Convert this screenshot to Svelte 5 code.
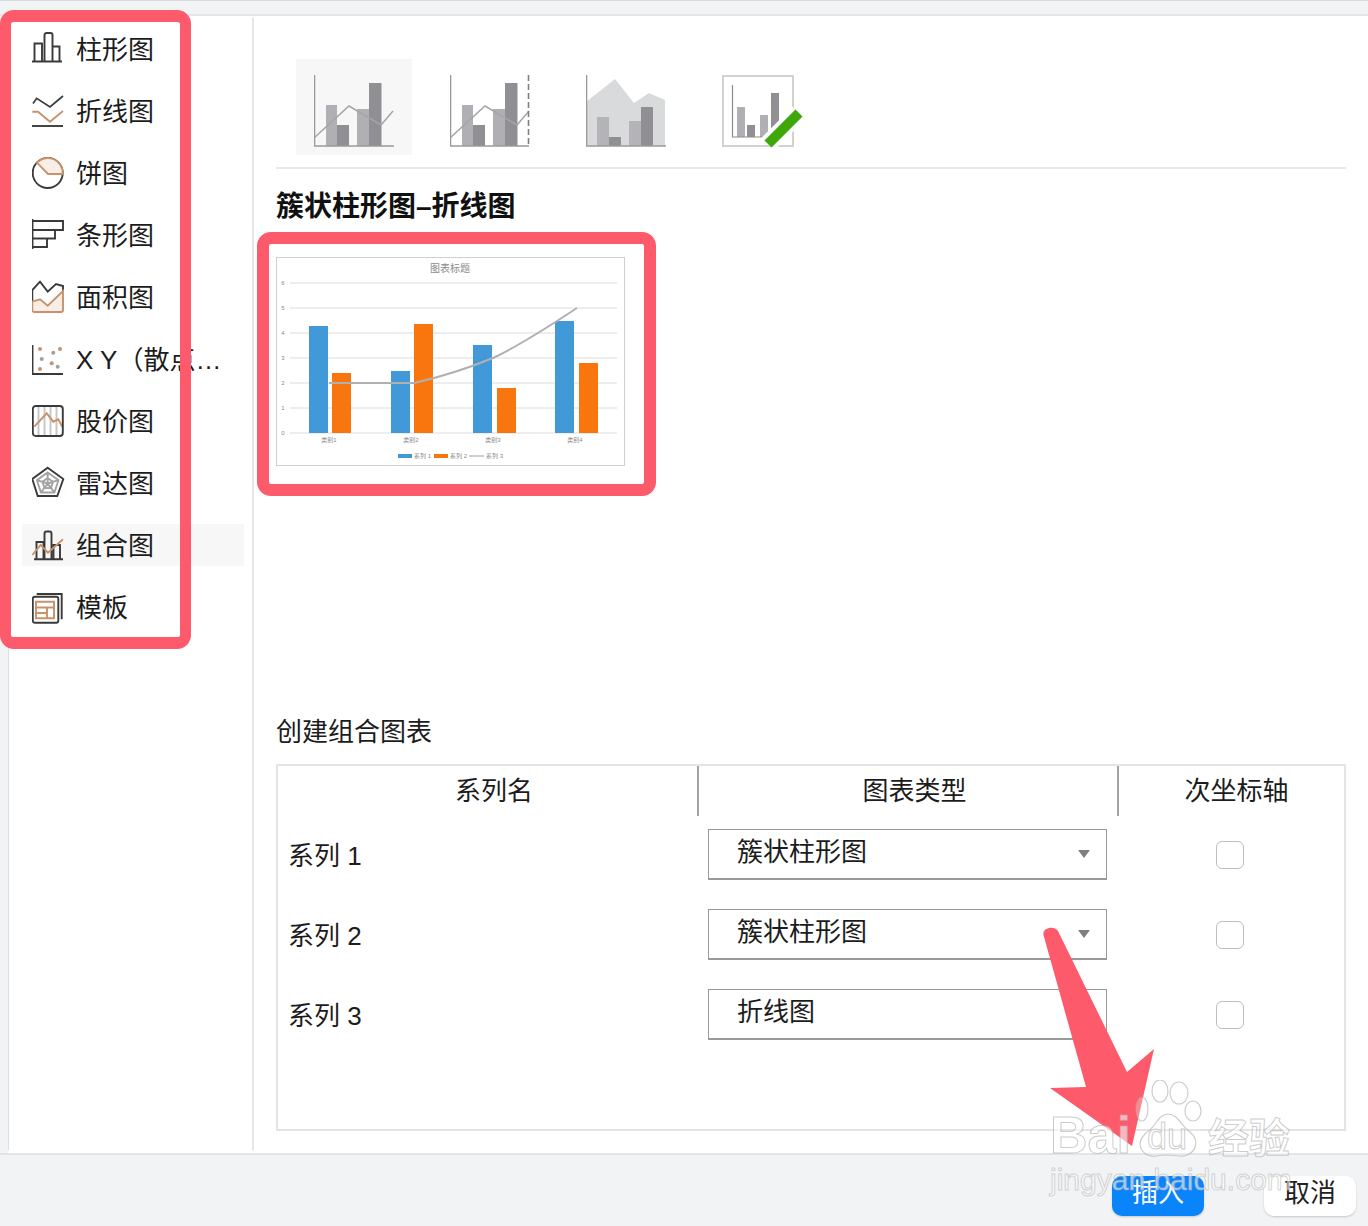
<script>
	const dark = '#3a3a3a';
	const brown = '#c8926a';

	const chartTypes = ['柱形图', '折线图', '饼图', '条形图', '面积图', 'X Y（散点图）', '股价图', '雷达图', '组合图', '模板'];

	// bars of the preview chart: x, top in preview coordinates
	const previewBars = [
		[33, 69, '#4299d8'], [56, 116, '#f9750d'],
		[115, 114, '#4299d8'], [138, 67, '#f9750d'],
		[197, 88, '#4299d8'], [221, 131, '#f9750d'],
		[279, 64, '#4299d8'], [303, 106, '#f9750d']
	];
	const gridLines = [6, 5, 4, 3, 2, 1, 0];
	const categories = ['类别1', '类别2', '类别3', '类别4'];
	const series = [
		{ name: '系列 1', type: '簇状柱形图' },
		{ name: '系列 2', type: '簇状柱形图' },
		{ name: '系列 3', type: '折线图' }
	];
</script>

<div class="dialog">
	<div class="topbar"></div>

	<div class="body">
		<nav class="sidebar">
			{#each chartTypes as label, i}
				<div class="item" class:selected={i === 8}>
					<svg class="icon" width="34" height="34" viewBox="0 0 34 34" fill="none" stroke={dark} stroke-width="1.9">
						{#if i === 0}
							<path d="M0 29.5H30M2.5 29.5V11.5H10V29.5M12.5 29.5V3a2 2 0 0 1 2-2h4a2 2 0 0 1 2 2V29.5M20.5 14.5H27.5V29.5" />
						{:else if i === 1}
							<path d="M1 9.5L4.7 4.3L18 13L31 2" stroke-width="1.7" />
							<path d="M0.3 17.7H6L18 27.7L31 17" stroke={brown} />
							<path d="M0 32H31" />
						{:else if i === 2}
							<circle cx="15.7" cy="17" r="15" />
							<path d="M16 18L4.9 6.6A15 15 0 0 1 30.7 18Z" fill="#f9eee7" stroke={brown} />
						{:else if i === 3}
							<path d="M0.5 1V31M0.5 3H31V12H0.5M23 12V20.5H0.5M15 20.5V29H0.5" />
						{:else if i === 4}
							<path d="M0.3 21.7V10L8 1.7L15.7 11.7L24 4L31 6V11" />
							<path d="M0.3 21.7L8 19.3L15.7 25.7L31 11V30a2 2 0 0 1-2 2H2.3a2 2 0 0 1-2-2Z" fill="#f9eee7" stroke={brown} />
						{:else if i === 5}
							<path d="M0.5 3V32H31" />
							<g fill={brown} stroke="none">
								<circle cx="8" cy="7" r="2" /><circle cx="28" cy="7" r="2" />
								<circle cx="19.7" cy="21.3" r="2" /><circle cx="8" cy="27" r="2" />
							</g>
							<g fill="#a0a0a0" stroke="none">
								<circle cx="21.3" cy="10.7" r="2" /><circle cx="9.7" cy="17" r="2" />
								<circle cx="25.7" cy="24.7" r="2" />
							</g>
						{:else if i === 6}
							<path d="M6.5 3V31M12.5 3V31M18.5 3V31M24.5 3V31" stroke="#c6c6c6" />
							<path d="M2.3 22.7L14.7 9.3L21.3 17.7L26.3 15.3L30.3 22.7" stroke={brown} />
							<rect x="0.8" y="2" width="30" height="30" rx="3" />
						{:else if i === 7}
							<path d="M15.7 6.5L26.5 14.2L22.4 26.5H9L4.9 14.2ZM15.7 12L21 15.8L19 22H12.4L10.4 15.8ZM15.7 6.5V17.5M26.5 14.2L15.7 17.5M22.4 26.5L15.7 17.5M9 26.5L15.7 17.5M4.9 14.2L15.7 17.5" stroke="#a3a3a3" />
							<path d="M15.7 1.7L31.3 13L25.3 30H5.7L0.3 13Z" />
						{:else if i === 8}
							<path d="M2 31.3H31M4.5 31.3V14H11.5V31.3M12.5 31.3V5.5a2 2 0 0 1 2-2h3a2 2 0 0 1 2 2V31.3M21.5 31.3V17H28V31.3" />
							<path d="M0.3 27L8.7 17L16 24.7L31 11.3" stroke={brown} />
						{:else}
							<path d="M4.7 4H29.7V29.3" />
							<rect x="0.8" y="6.7" width="25.5" height="26" rx="2" />
							<path d="M4 11.7H22V17.5H4ZM4 17.5V28.3H22V17.5M15 17.5V28.3M4 23H15" stroke={brown} />
						{/if}
					</svg>
					<span class="item-label">{label}</span>
				</div>
			{/each}
		</nav>

		<main class="main">
			<div class="thumbs">
				<div class="thumb active">
					<svg width="80" height="72" viewBox="0 0 80 72" fill="none">
						<path d="M12 30H23V71H12ZM43 34H55V71H43Z" fill="#b0b0b4" />
						<path d="M23 50H35V71H23ZM55 8H67.5V71H55Z" fill="#909094" />
						<path d="M0 63L35 31L67 50L79 36" stroke="#a5a5a8" stroke-width="1.5" />
						<path d="M0.5 0V71H80" stroke="#9a9a9a" stroke-width="1.6" />
					</svg>
				</div>
				<div class="thumb">
					<svg width="80" height="72" viewBox="0 0 80 72" fill="none">
						<path d="M12 30H23V71H12ZM43 34H55V71H43Z" fill="#b0b0b4" />
						<path d="M23 50H35V71H23ZM55 8H67.5V71H55Z" fill="#909094" />
						<path d="M0 63L35 31L67 50L79 36" stroke="#a5a5a8" stroke-width="1.5" />
						<path d="M0.5 0V71H79" stroke="#9a9a9a" stroke-width="1.6" />
						<path d="M78.5 0V71" stroke="#808080" stroke-width="1.6" stroke-dasharray="6 3" />
					</svg>
				</div>
				<div class="thumb">
					<svg width="80" height="72" viewBox="0 0 80 72" fill="none">
						<path d="M0 27L29 4L48 28L63 18L79 25V71H0Z" fill="#d8dadb" />
						<path d="M11 42H23V71H11ZM43 46H55V71H43Z" fill="#b4b4b8" />
						<path d="M23 62H35V71H23ZM55 32H67V71H55Z" fill="#909094" />
						<path d="M0.5 0V71H80" stroke="#9a9a9a" stroke-width="1.6" />
					</svg>
				</div>
				<div class="thumb">
					<svg class="overflowing" width="80" height="72" viewBox="0 0 80 72" fill="none">
						<rect x="1" y="1" width="70" height="70" stroke="#d2d2d2" stroke-width="2" />
						<path d="M15 32H23V62H15ZM38 40H46V62H38Z" fill="#b0b0b4" />
						<path d="M25 50H33V62H25ZM49 18H57V62H49Z" fill="#909094" />
						<path d="M10.5 10V62H45" stroke="#8c8c8c" stroke-width="1.2" />
						<path d="M46 69L77 38" stroke="#fff" stroke-width="18" />
						<path d="M46 69L77 38" stroke="#3fa70a" stroke-width="10" />
					</svg>
				</div>
			</div>

			<h2 class="combo-title">簇状柱形图–折线图</h2>

			<div class="preview">
				<svg width="347" height="207" viewBox="1 1 347 207" fill="none">
					<text class="chart-title" x="174" y="15" text-anchor="middle">图表标题</text>
					{#each gridLines as n, i}
						<line x1="14" x2="341" y1={26 + i * 25} y2={26 + i * 25} stroke="#dcdcdc" />
						<text class="chart-small" x="7" y={28 + i * 25} text-anchor="middle">{n}</text>
					{/each}
					{#each previewBars as [x, top, color]}
						<rect {x} y={top} width="19" height={176 - top} fill={color} />
					{/each}
					<path d="M53 126H138C165 120 190 112 217 101C245 88 275 68 301 51" stroke="#b0b0b0" stroke-width="2" />
					{#each categories as name, i}
						<text class="chart-small" x={53 + i * 82} y="185" text-anchor="middle">{name}</text>
					{/each}
					<rect x="122" y="197" width="14" height="4" fill="#4299d8" />
					<text class="chart-small" x="138" y="201">系列 1</text>
					<rect x="158" y="197" width="14" height="4" fill="#f9750d" />
					<text class="chart-small" x="174" y="201">系列 2</text>
					<line x1="193" x2="208" y1="199" y2="199" stroke="#b0b0b0" stroke-width="1.2" />
					<text class="chart-small" x="210" y="201">系列 3</text>
				</svg>
			</div>

			<h3 class="create-title">创建组合图表</h3>

			<div class="table">
				<div class="row head">
					<div class="th">系列名</div>
					<div class="th">图表类型</div>
					<div class="th last">次坐标轴</div>
				</div>
				{#each series as s}
					<div class="row">
						<div class="name">{s.name}</div>
						<div class="cell">
							<div class="select">
								<span>{s.type}</span>
								<i class="caret"></i>
							</div>
						</div>
						<div class="check-cell"><span class="check"></span></div>
					</div>
				{/each}
			</div>
		</main>
	</div>

	<footer class="footer">
		<button class="btn primary">插入</button>
		<button class="btn">取消</button>
	</footer>

	<!-- annotations drawn on top of the screenshot -->
	<div class="mark mark-side"></div>
	<div class="mark mark-preview"></div>
	<svg class="arrow" width="120" height="222" viewBox="1040 926 120 222">
		<path d="M1043.5 935C1042 928 1054 925 1058 931L1127 1072L1154 1049L1132 1146L1050 1088L1086 1087Z" fill="#fd5a6b" />
	</svg>

	<div class="watermark">
		<svg class="paw" width="70" height="78" viewBox="0 0 70 78" fill="rgba(255,255,255,.28)" stroke="rgba(170,170,170,.6)" stroke-width="1.2">
			<ellipse cx="8" cy="29" rx="6" ry="12" />
			<ellipse cx="26" cy="11" rx="8" ry="11" />
			<ellipse cx="45" cy="13" rx="9" ry="11" />
			<ellipse cx="59" cy="31" rx="8" ry="10" />
			<path d="M34 34C44 34 47 46 56 52C68 62 60 77 46 76C38 75 30 74 22 76C8 77 0 64 12 53C22 47 24 34 34 34Z" />
		</svg>
		<div class="wm-top"><span class="wm-bai">Bai</span><span class="wm-du">du</span><span class="wm-cn">经验</span></div>
		<div class="wm-url">jingyan.baidu.com</div>
	</div>
</div>

<style>
	:global(body) {
		margin: 0;
		background: #fff;
	}

	.dialog {
		position: relative;
		width: 1368px;
		height: 1226px;
		overflow: hidden;
		display: flex;
		flex-direction: column;
		font-family: "Liberation Sans", "Noto Sans CJK SC", sans-serif;
		color: #1c1c1c;
		font-size: 26px;
	}

	.topbar {
		height: 13px;
		flex: none;
		background: #f1f3f5;
		border-top: 1px solid #d6d8da;
		border-bottom: 2px solid #e4e6e8;
	}

	.body {
		flex: 1;
		display: flex;
		min-height: 0;
		background: #fff;
		border-left: 8px solid #f1f3f5;
	}

	.sidebar {
		flex: none;
		width: 222px;
		margin-top: 2px;
		margin-bottom: 3px;
		padding: 10px 8px 0 13px;
		border-left: 1px solid #dcdee0;
		border-right: 2px solid #e4e6e8;
		display: flex;
		flex-direction: column;
		gap: 20px;
	}

	.item {
		height: 42px;
		flex: none;
		display: flex;
		align-items: center;
		padding-left: 10px;
		gap: 11px;
	}

	.item.selected {
		background: #f7f7f7;
	}

	.icon {
		flex: none;
	}

	.item-label {
		width: 146px;
		margin-left: -1px;
		padding-bottom: 4px;
		white-space: nowrap;
		overflow: hidden;
		text-overflow: ellipsis;
	}

	.main {
		flex: 1;
		min-width: 0;
		padding: 43px 22px 0;
	}

	.thumbs {
		display: flex;
		gap: 20px;
		padding: 0 0 12px 20px;
		border-bottom: 2px solid #e8e8e8;
	}

	.thumb {
		width: 116px;
		height: 96px;
		display: flex;
		align-items: flex-end;
		justify-content: center;
		padding: 16px 18px 8px;
		box-sizing: border-box;
	}

	.thumb.active {
		background: #f7f7f7;
	}

	.overflowing {
		overflow: visible;
	}

	.combo-title {
		margin: 20px 0 -2px;
		font-size: 28px;
		line-height: 36px;
		font-weight: 700;
		color: #111;
	}

	.preview {
		margin-top: 34px;
		width: 347px;
		height: 207px;
		border: 1px solid #cfcfcf;
	}

	.preview svg {
		display: block;
	}

	.chart-title {
		font-size: 10px;
		fill: #8a8a8a;
	}

	.chart-small {
		font-size: 6px;
		fill: #8a8a8a;
	}

	.create-title {
		margin: 248px 0 14px;
		font-size: 26px;
		line-height: 36px;
		font-weight: 400;
	}

	.table {
		height: 367px;
		box-sizing: border-box;
		border: 2px solid #e4e4e4;
	}

	.row {
		display: grid;
		grid-template-columns: 421px 420px 1fr;
		height: 80px;
		align-items: center;
	}

	.row.head {
		height: 49px;
		align-items: stretch;
		margin-bottom: 8px;
	}

	.th {
		text-align: center;
		padding-left: 13px;
		line-height: 50px;
		border-right: 2px solid #a4a4a4;
	}

	.th.last {
		padding-left: 10px;
		border-right: 0;
	}

	.name {
		padding-left: 10px;
		margin-bottom: 20px;
	}

	.cell {
		padding-left: 9px;
		margin-bottom: 18px;
	}

	.select {
		width: 399px;
		height: 51px;
		box-sizing: border-box;
		display: flex;
		align-items: center;
		justify-content: space-between;
		padding: 0 16px 8px 28px;
		border: 1px solid #999;
		border-bottom-width: 2px;
	}

	.caret {
		width: 0;
		height: 0;
		margin-top: 8px;
		border-left: 6px solid transparent;
		border-right: 6px solid transparent;
		border-top: 8px solid #7f7f7f;
	}

	.check-cell {
		display: flex;
		justify-content: center;
		padding-right: 3px;
		margin-bottom: 16px;
	}

	.check {
		width: 28px;
		height: 28px;
		box-sizing: border-box;
		border: 1px solid #bdbdbd;
		border-radius: 6px;
	}

	.footer {
		height: 73px;
		flex: none;
		box-sizing: border-box;
		padding: 21px 12px 0 0;
		background: #f1f3f5;
		border-top: 2px solid #e2e4e6;
		display: flex;
		justify-content: flex-end;
		gap: 60px;
	}

	.btn {
		width: 92px;
		height: 40px;
		padding: 0;
		display: flex;
		justify-content: center;
		align-items: flex-start;
		font: inherit;
		line-height: 34px;
		color: #222;
		background: #fff;
		border: 0;
		border-radius: 10px;
		box-shadow: 0 1px 2px rgba(0, 0, 0, 0.18);
	}

	.btn.primary {
		color: #fff;
		background: #0a84fb;
	}

	.mark {
		position: absolute;
		box-sizing: border-box;
		border: 11px solid #fd5a6b;
		border-radius: 14px;
	}

	.mark-side {
		left: 0;
		top: 10px;
		width: 191px;
		height: 639px;
		border-width: 12px 11px;
	}

	.mark-preview {
		left: 257px;
		top: 232px;
		width: 399px;
		height: 264px;
		border-width: 12px;
	}

	.arrow {
		position: absolute;
		left: 1040px;
		top: 926px;
	}

	.watermark {
		position: absolute;
		left: 1050px;
		top: 1080px;
		width: 250px;
		height: 120px;
	}

	.paw {
		position: absolute;
		left: 84px;
		top: 0;
	}

	.wm-top {
		position: absolute;
		left: 0;
		top: 30px;
		display: flex;
		align-items: baseline;
		line-height: 50px;
		color: rgba(255, 255, 255, 0.55);
		-webkit-text-stroke: 1px rgba(170, 170, 170, 0.6);
		font-weight: 700;
	}

	.wm-bai {
		font-size: 52px;
		width: 97px;
	}

	.wm-du {
		font-size: 36px;
		font-weight: 400;
		width: 61px;
		position: relative;
		top: -4px;
	}

	.wm-cn {
		font-size: 41px;
	}

	.wm-url {
		position: absolute;
		left: 0;
		top: 82px;
		font-size: 30px;
		line-height: 36px;
		color: rgba(255, 255, 255, 0.6);
		-webkit-text-stroke: 1px rgba(170, 170, 170, 0.5);
	}
</style>
